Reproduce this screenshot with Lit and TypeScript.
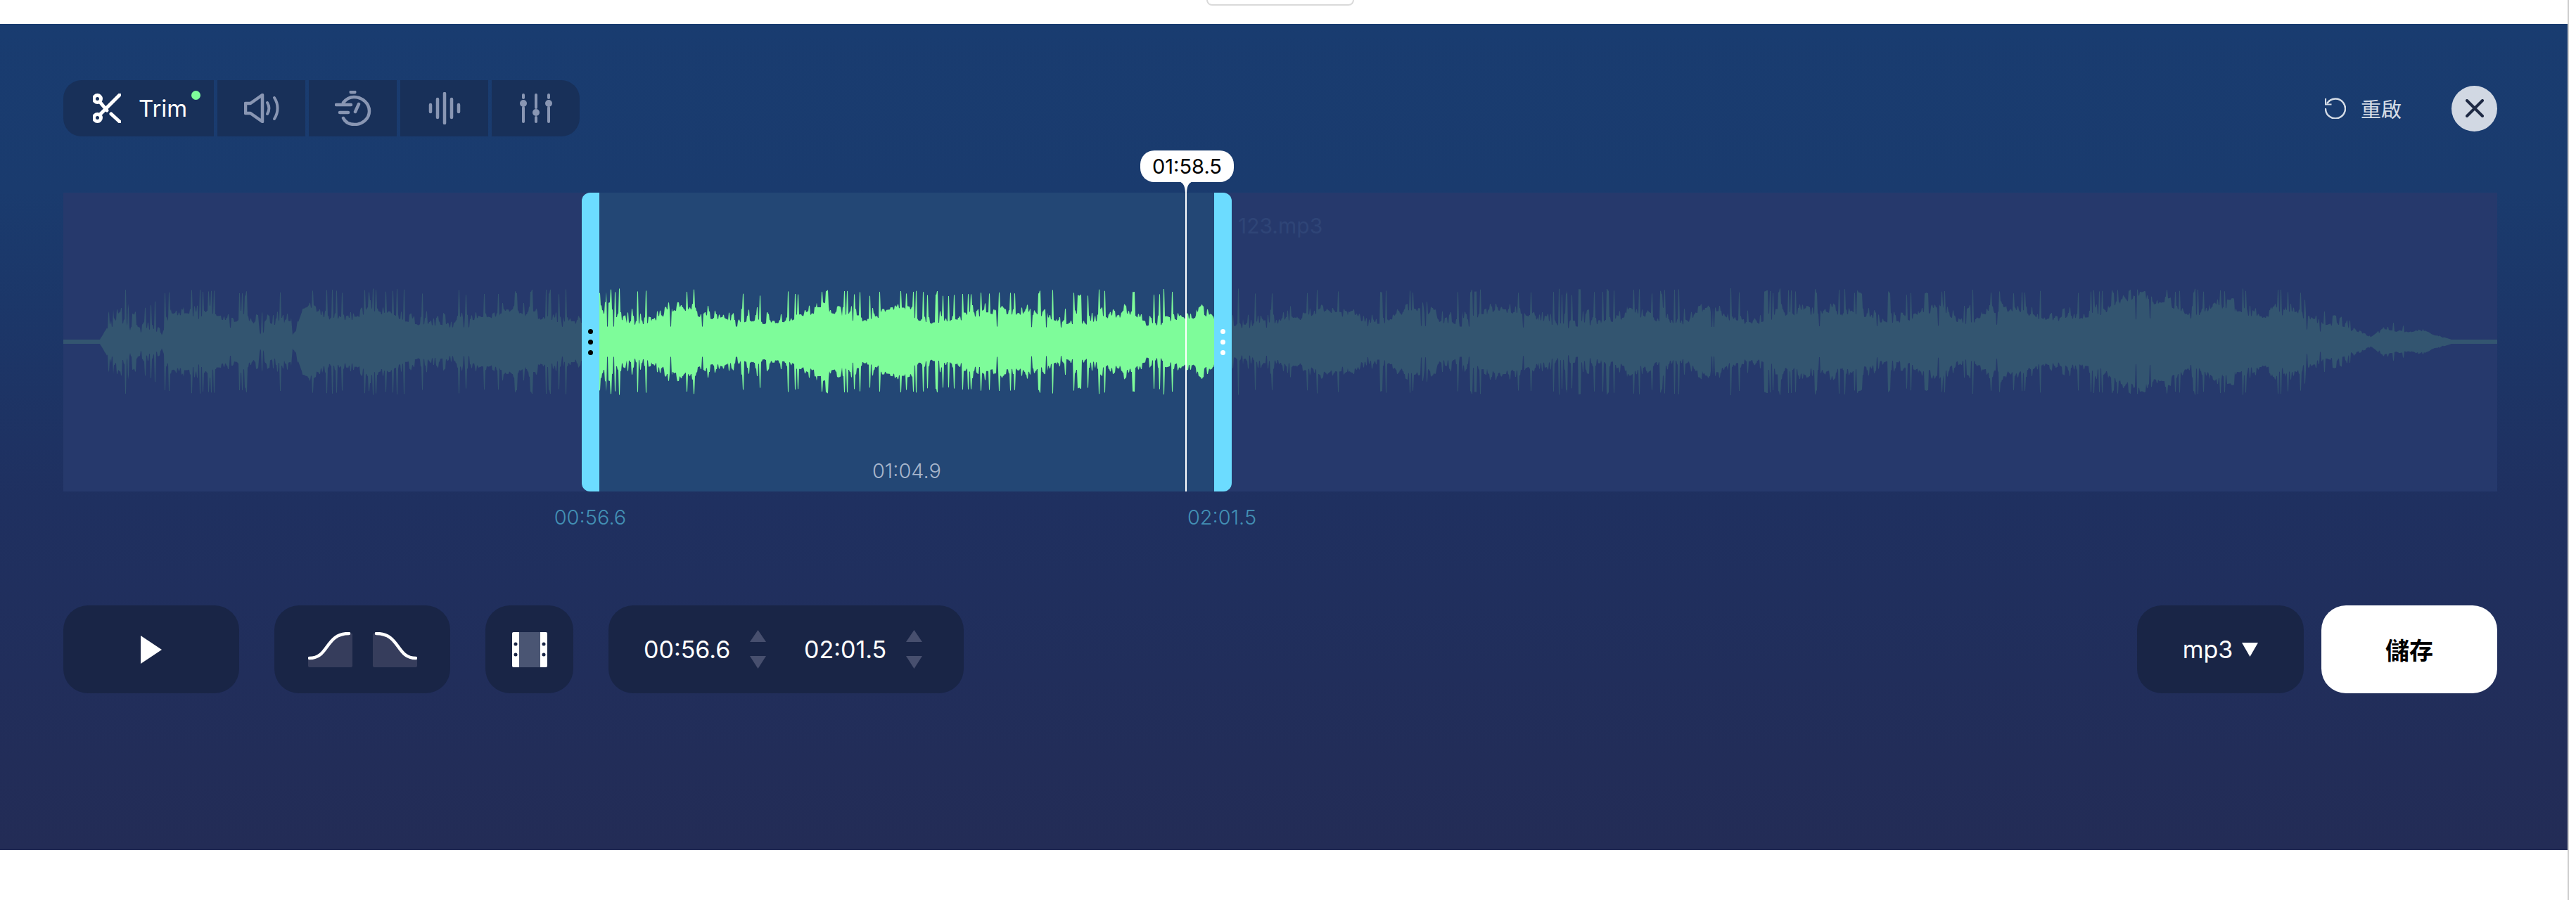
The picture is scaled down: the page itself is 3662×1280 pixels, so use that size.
import { LitElement, html, css, svg } from "lit";
import { customElement } from "lit/decorators.js";

const ENV: [number, number, number][] = [
  [0, 3, 3], [52, 3, 3], [58, 14, 20], [72, 40, 74], [90, 36, 76], [95, 10, 40], [115, 26, 50], [140, 8, 70],
  [150, 30, 76], [210, 34, 74], [278, 32, 74], [280, 5, 40], [290, 34, 74], [324, 30, 74], [326, 5, 40], [340, 36, 74],
  [400, 44, 74], [440, 34, 76], [620, 34, 74], [762, 36, 76], [870, 36, 76], [1060, 36, 74], [1150, 40, 72],
  [1400, 34, 74], [1650, 32, 76], [1900, 38, 74], [2150, 32, 76], [2400, 36, 76], [2700, 38, 74], [2900, 48, 74],
  [3010, 60, 76], [3060, 44, 76], [3130, 50, 76], [3180, 40, 76], [3192, 26, 52], [3260, 18, 28], [3280, 8, 12],
  [3297, 26, 30], [3330, 18, 24], [3345, 20, 22], [3380, 6, 8], [3395, 3, 3], [3460, 3, 3],
];

function interp(x: number, k: 1 | 2) {
  for (let i = 1; i < ENV.length; i++) {
    if (x <= ENV[i][0]) {
      const a = ENV[i - 1], b = ENV[i];
      const t = (x - a[0]) / (b[0] - a[0] || 1);
      return a[k] + (b[k] - a[k]) * t;
    }
  }
  return 3;
}

function buildWave() {
  let seed = 90817;
  const rnd = () => {
    seed = (seed * 1664525 + 1013904223) >>> 0;
    return seed / 4294967296;
  };
  const amps: number[] = [];
  let bump = 0, spikeLevel = 0, cluster = 0.5, dip = 0;
  for (let x = 0; x <= 3460; x++) {
    const b0 = interp(x, 1), s = interp(x, 2);
    if (x % 9 === 0) bump = 0.66 + 0.5 * (0.5 + 0.5 * Math.sin(x / 23 + 1.3 * Math.sin(x / 61))) * (0.6 + 0.8 * rnd());
    if (x % 14 === 0) cluster = 0.3 + 0.7 * rnd();
    if (x % 2 === 0) {
      const r = rnd();
      spikeLevel = r > 0.86 ? 0.82 + rnd() * 0.18 : r > 0.45 ? (0.15 + rnd() * 0.4) * cluster : rnd() * 0.15 * cluster;
    }
    const b = b0 * bump;
    let v = b + (s - b) * spikeLevel;
    if (b0 > 20 && rnd() > 0.988) dip = 2;
    if (dip > 0) { v = b0 * 0.6; dip--; }
    amps.push(Math.min(Math.max(v, 3), s));
  }
  return amps;
}

function pathFor(amps: number[], from: number, to: number, cy: number) {
  const top: string[] = [], bot: string[] = [];
  for (let x = from; x <= to; x++) {
    top.push(`${x} ${(cy - amps[x]).toFixed(1)}`);
    bot.unshift(`${x} ${(cy + amps[x]).toFixed(1)}`);
  }
  return "M" + top.join("L") + "L" + bot.join("L") + "Z";
}

const AMPS = buildWave();
const CY = 212;
const DIM = pathFor(AMPS, 0, 3460, CY);
const GREEN = pathFor(AMPS, 762, 1636, CY);

@customElement("app-root")
export class AppRoot extends LitElement {
  static styles = css`
    :host { display: block; background: #fff; font-family: Inter, "Noto Sans CJK TC", sans-serif; }
    .page { display: flex; height: 1280px; box-sizing: content-box; width: 3650px; border-right: 2px solid #cfcfcf; }
    .column { width: 3650px; display: flex; flex-direction: column; }
    .tabstrip { height: 34px; padding-left: 1715px; box-sizing: border-box; }
    .tab { width: 210px; height: 8px; box-sizing: border-box; border: 2px solid #dadada; border-top: 0; border-radius: 0 0 12px 12px; background: #fff; }
    .panel { height: 1175px; box-sizing: border-box; padding: 80px 100px 0 90px; background: linear-gradient(180deg, #193c70 0%, #1a3b6e 20%, #1f3060 58%, #232c56 100%); display: flex; flex-direction: column; }
    .toprow { display: flex; justify-content: space-between; align-items: center; height: 80px; }
    .tools { display: flex; gap: 5px; height: 80px; }
    .tool { width: 125px; background: #183059; display: flex; align-items: center; justify-content: center; color: #8996b3; }
    .tool.first { width: 214px; border-radius: 26px 0 0 26px; color: #fff; gap: 25px; position: relative; box-sizing: border-box; justify-content: flex-start; padding-left: 42px; font-size: 33px; font-weight: 400; }
    .tool.last { border-radius: 0 26px 26px 0; }
    .dot { position: absolute; width: 13px; height: 13px; left: 182px; top: 15px; border-radius: 50%; background: #7efc9a; }
    .right { display: flex; align-items: center; }
    .redo { display: flex; align-items: center; gap: 21px; color: #d5dce6; font-size: 29px; margin-right: 71px; }
    .close { width: 65px; height: 65px; border-radius: 50%; background: #d1d8e3; display: flex; align-items: center; justify-content: center; }
    .track { position: relative; height: 425px; margin-top: 80px; background: #26396c; }
    .sel { position: absolute; left: 762px; width: 874px; top: 0; bottom: 0; background: #234775; }
    .wave { position: absolute; left: 0; top: 0; display: block; }
    .handle { position: absolute; top: 0; bottom: 0; width: 25px; background: #6cdcff; display: flex; flex-direction: column; align-items: center; justify-content: center; gap: 8px; }
    .handle.l { left: 737px; border-radius: 12px 0 0 12px; }
    .handle.r { left: 1636px; border-radius: 0 12px 12px 0; }
    .handle i { width: 7px; height: 7px; border-radius: 50%; background: #000; }
    .handle.r i { background: #fff; }
    .playhead { position: absolute; left: 1595px; width: 2px; top: 0; bottom: 0; background: #fff; }
    .tip { position: absolute; left: 1531px; top: -60px; width: 133px; height: 45px; line-height: 45px; border-radius: 20px; background: #fff; color: #000; font-size: 29px; text-align: center; }
    .tail { position: absolute; left: 1586px; top: -16px; display: block; }
    .file { position: absolute; left: 1670px; top: 29px; color: #2f4577; font-size: 30px; line-height: 36px; }
    .dur { position: absolute; left: 762px; width: 874px; text-align: center; top: 374px; line-height: 44px; font-size: 29px; font-weight: 300; color: #a8b6cc; }
    .mark { position: absolute; top: 437px; line-height: 50px; font-size: 29px; font-weight: 300; color: #4390b5; transform: translateX(-50%); }
    .controls { display: flex; align-items: center; justify-content: space-between; margin-top: 162px; }
    .group { display: flex; gap: 50px; }
    .group.end { gap: 25px; }
    .box { height: 125px; border-radius: 35px; background: #192546; display: flex; align-items: center; justify-content: center; color: #fff; box-sizing: border-box; }
    .w250 { width: 250px; }
    .w125 { width: 125px; }
    .fades { gap: 29px; }
    .times { width: 505px; justify-content: flex-start; padding-left: 50px; font-size: 34px; font-weight: 400; }
    .time1 { width: 151px; }
    .time2 { width: 145px; margin-left: 54px; }
    .steps { display: flex; flex-direction: column; gap: 20px; width: 23px; }
    .format { width: 237px; font-size: 34px; gap: 13px; }
    .save { width: 250px; background: #fff; color: #000; font-size: 34px; font-weight: 700; font-family: "Noto Sans CJK TC", sans-serif; }
    svg { display: block; flex: none; }
  `;

  private stepper() {
    return html`<div class="steps">
      <svg width="23" height="17" viewBox="0 0 23 17"><path d="M11.5 0L23 17H0Z" fill="#474f6e"/></svg>
      <svg width="23" height="18" viewBox="0 0 23 18"><path d="M0 0H23L11.5 18Z" fill="#474f6e"/></svg>
    </div>`;
  }

  render() {
    return html`<div class="page"><div class="column">
      <div class="tabstrip"><div class="tab"></div></div>
      <div class="panel">
        <div class="toprow">
          <div class="tools">
            <div class="tool first">
              <svg width="40" height="42" viewBox="0 0 40 42" fill="none" stroke="#fff" stroke-width="5" stroke-linecap="round">
                <circle cx="6.5" cy="7.5" r="5"/><circle cx="6.5" cy="34.5" r="5"/>
                <path d="M10 30L38 2"/><path d="M10 12L20 24"/><path d="M26 29L38 40"/>
              </svg>
              <span>Trim</span><span class="dot"></span>
            </div>
            <div class="tool">
              <svg width="50" height="42" viewBox="0 0 50 42" fill="none" stroke="currentColor" stroke-width="4" stroke-linejoin="round" stroke-linecap="round">
                <path d="M2 14H9L26 2V40L9 28H2Z" stroke-width="4.5"/>
                <path d="M33 13C36 18 36 24 33 29"/><path d="M43 6C49 15 49 27 43 36"/>
              </svg>
            </div>
            <div class="tool">
              <svg width="52" height="50" viewBox="0 0 52 50" fill="none" stroke="currentColor" stroke-width="4.5" stroke-linecap="round">
                <path d="M23 2H28" stroke-width="5"/>
                <path d="M12 17C16 12 21 9 27 9C39 9 49 18 49 29C49 40 39 48 28 48C21 48 15 45 12 39"/>
                <path d="M2 20H23M7 31H19M29 30L34 19"/>
              </svg>
            </div>
            <div class="tool">
              <svg width="46" height="46" viewBox="0 0 46 46" fill="none" stroke="currentColor" stroke-width="4.5" stroke-linecap="round">
                <path d="M3 18V28M13 10V36M23 2V44M33 10V36M43 18V28"/>
              </svg>
            </div>
            <div class="tool last">
              <svg width="46" height="42" viewBox="0 0 46 42" fill="none" stroke="currentColor" stroke-width="4" stroke-linecap="round">
                <path d="M5 2V6M5 20V40M23 2V20M23 34V40M41 2V6M41 20V40"/>
                <circle cx="5" cy="14" r="5" fill="currentColor" stroke="none"/>
                <circle cx="23" cy="27" r="5" fill="currentColor" stroke="none"/>
                <circle cx="41" cy="14" r="5" fill="currentColor" stroke="none"/>
              </svg>
            </div>
          </div>
          <div class="right">
            <div class="redo">
              <svg width="30" height="30" viewBox="0 0 30 30" fill="none" stroke="#d5dce6" stroke-width="2.4">
                <path d="M3.5 7.5A14 14 0 1 1 1 16" stroke-linecap="round"/>
                <path d="M1 1V9.5H9.5" stroke-width="2.2"/>
              </svg>
              <span>重啟</span>
            </div>
            <div class="close">
              <svg width="26" height="26" viewBox="0 0 26 26" fill="none" stroke="#1f2a44" stroke-width="4" stroke-linecap="round"><path d="M2 2L24 24M24 2L2 24"/></svg>
            </div>
          </div>
        </div>

        <div class="track">
          <div class="sel"></div>
          <svg class="wave" width="3460" height="425" viewBox="0 0 3460 425">
            ${svg`<path d=${DIM} fill="#335570"/><path d=${GREEN} fill="#7efc9a"/>`}
          </svg>
          <div class="file">123.mp3</div>
          <div class="handle l"><i></i><i></i><i></i></div>
          <div class="handle r"><i></i><i></i><i></i></div>
          <div class="playhead"></div>
          <svg class="tail" width="20" height="16" viewBox="0 0 20 16"><path d="M0 0H20C14 2 11.5 6 11 16H9C8.5 6 6 2 0 0Z" fill="#fff"/></svg>
          <div class="tip">01:58.5</div>
          <div class="dur">01:04.9</div>
          <div class="mark" style="left:749px">00:56.6</div>
          <div class="mark" style="left:1647px">02:01.5</div>
        </div>

        <div class="controls">
          <div class="group">
            <div class="box w250">
              <svg width="30" height="40" viewBox="0 0 30 40"><path d="M0 0L30 20L0 40Z" fill="#fff"/></svg>
            </div>
            <div class="box w250 fades">
              <svg width="63" height="50" viewBox="0 0 63 50">
                <path d="M0 37C30 37 24 2 60 2H63V48Q63 50 61 50H2Q0 50 0 48Z" fill="#363d5c"/>
                <path d="M2 37C30 37 24 2 58 2" fill="none" stroke="#fff" stroke-width="4.5" stroke-linecap="round"/>
              </svg>
              <svg width="63" height="50" viewBox="0 0 63 50">
                <path d="M63 37C33 37 39 2 3 2H0V48Q0 50 2 50H61Q63 50 63 48Z" fill="#363d5c"/>
                <path d="M61 37C33 37 39 2 5 2" fill="none" stroke="#fff" stroke-width="4.5" stroke-linecap="round"/>
              </svg>
            </div>
            <div class="box w125">
              <svg width="50" height="50" viewBox="0 0 50 50">
                <rect x="4" width="42" height="50" fill="#4a5573"/>
                <path d="M2 0H10V50H2Q0 50 0 48V2Q0 0 2 0ZM40 0H48Q50 0 50 2V48Q50 50 48 50H40Z" fill="#fff"/>
                <g fill="#192546"><circle cx="5" cy="17" r="2.5"/><circle cx="5" cy="32" r="2.5"/><circle cx="45" cy="17" r="2.5"/><circle cx="45" cy="32" r="2.5"/></g>
              </svg>
            </div>
            <div class="box times">
              <span class="time1">00:56.6</span>${this.stepper()}
              <span class="time2">02:01.5</span>${this.stepper()}
            </div>
          </div>
          <div class="group end">
            <div class="box format"><span>mp3</span>
              <svg width="23" height="20" viewBox="0 0 23 20"><path d="M0 0H23L11.5 20Z" fill="#fff"/></svg>
            </div>
            <div class="box save">儲存</div>
          </div>
        </div>
      </div>
    </div></div>`;
  }
}
